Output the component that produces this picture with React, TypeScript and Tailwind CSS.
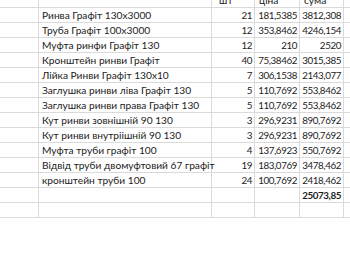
import React from 'react'

// рядки кошторису: назва, кількість, ціна, сума
const rows = [
    { name: 'Ринва Графіт 130х3000', qty: '21', price: '181,5385', sum: '3812,308' },
    { name: 'Труба Графіт 100х3000', qty: '12', price: '353,8462', sum: '4246,154' },
    { name: 'Муфта ринфи Графіт 130', qty: '12', price: '210', sum: '2520' },
    { name: 'Кронштейн ринви Графіт', qty: '40', price: '75,38462', sum: '3015,385' },
    { name: 'Лійка Ринви Графіт 130х10', qty: '7', price: '306,1538', sum: '2143,077' },
    { name: 'Заглушка ринви ліва Графіт 130', qty: '5', price: '110,7692', sum: '553,8462' },
    { name: 'Заглушка ринви права Графіт 130', qty: '5', price: '110,7692', sum: '553,8462' },
    { name: 'Кут ринви зовнішній 90 130', qty: '3', price: '296,9231', sum: '890,7692' },
    { name: 'Кут ринви внутріішній 90 130', qty: '3', price: '296,9231', sum: '890,7692' },
    { name: 'Муфта труби графіт 100', qty: '4', price: '137,6923', sum: '550,7692' },
    { name: 'Відвід труби двомуфтовий 67 графіт', qty: '19', price: '183,0769', sum: '3478,462' },
    { name: 'кронштейн труби 100', qty: '24', price: '100,7692', sum: '2418,462' },
]

const cell = 'h-[15px] border-r border-b border-[#dadada] whitespace-nowrap leading-[14px]'
const num = `${cell} pr-[2px] text-right text-[9.8px] tracking-[-0.4px]`

function Row({ name = '', qty = '', price = '', sum = '', bold = false }) {
    return (
        <>
            <div className={cell} />
            <div className={`${cell} pl-[3px]`}>{name}</div>
            <div className={num}>{qty}</div>
            <div className={num}>{price}</div>
            <div className={`${num} ${bold ? 'font-bold' : ''}`}>{sum}</div>
            <div className="h-[15px] border-b border-[#dadada]" />
        </>
    )
}

export default function App() {
    return (
        <div className="w-[350px] h-[260px] overflow-hidden bg-white text-[10.2px] text-[#1c1c1c] font-['Lato','Liberation_Sans',sans-serif]">
            <div className="-mt-[7px] grid grid-cols-[39px_173px_43px_45px_44px_1fr]">
                <div className={cell} />
                <div className={cell} />
                <div className={`${cell} pl-[7px]`}>шт</div>
                <div className={`${cell} pl-[4px]`}>ціна</div>
                <div className={`${cell} pl-[4px]`}>сума</div>
                <div className="h-[15px] border-b border-[#dadada]" />
                {rows.map((r) => (
                    <Row key={r.name} {...r} />
                ))}
                <Row sum="25073,85" bold />
                <Row />
            </div>
        </div>
    )
}
